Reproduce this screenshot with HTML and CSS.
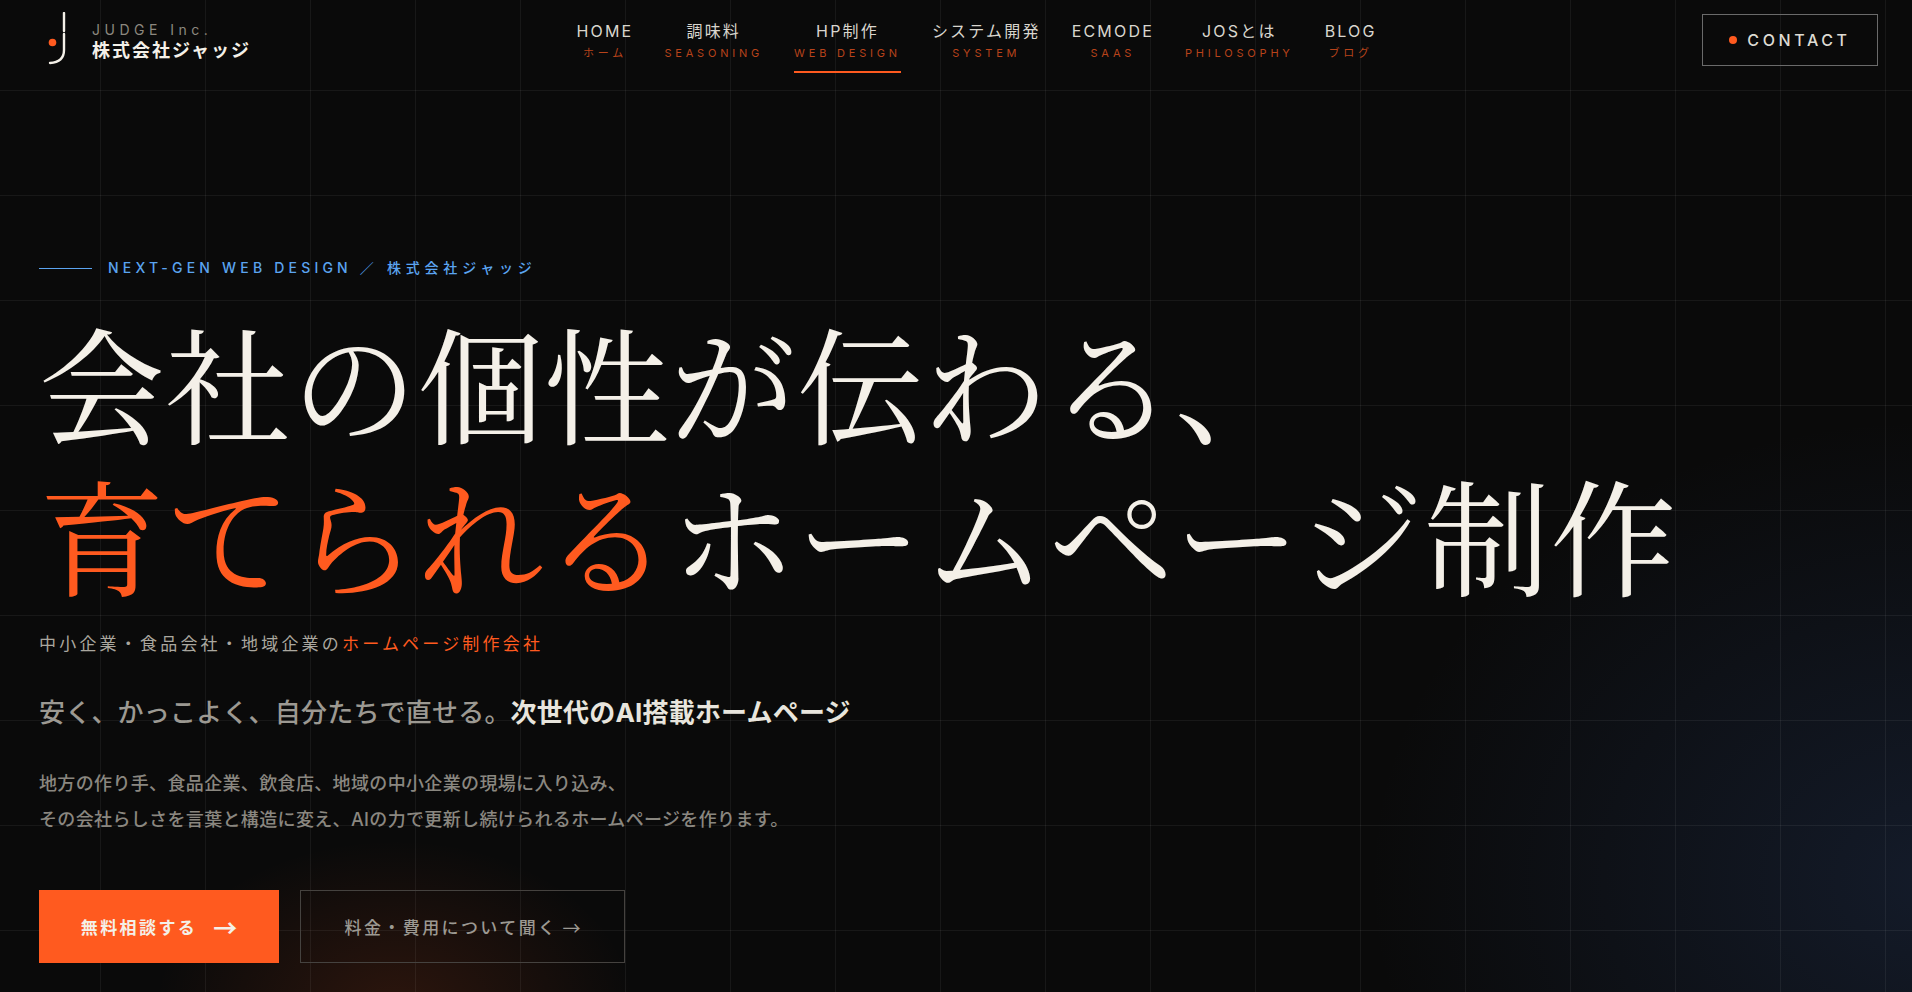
FILE: index.html
```html
<!DOCTYPE html>
<html lang="ja">
<head>
  <meta charset="UTF-8" />
  <meta name="viewport" content="width=device-width, initial-scale=1.0"/>
  <title>株式会社ジャッジ</title>
  <link rel="stylesheet" href="styles.css">
</head>
<body>
  <header class="site-header">
    <a class="logo" href="#">
      <svg class="logo-mark" width="30" height="56" viewBox="0 0 30 56" fill="none">
        <path d="M25 1V19" stroke="#f4f0e8" stroke-width="2.400" stroke-linecap="round"/>
        <path d="M25 22V38C25 46 20 50.500 11 51" stroke="#f4f0e8" stroke-width="2.400" stroke-linecap="round"/>
        <circle cx="13.500" cy="30.500" r="3.800" fill="#ff5a1f"/>
      </svg>
      <span class="logo-text">
        <span class="logo-en">JUDGE Inc.</span>
        <span class="logo-ja">株式会社ジャッジ</span>
      </span>
    </a>

    <nav class="nav">
      <a class="nav-item" href="#"><span class="nav-main">HOME</span><span class="nav-sub">ホーム</span></a>
      <a class="nav-item" href="#"><span class="nav-main">調味料</span><span class="nav-sub">SEASONING</span></a>
      <a class="nav-item active" href="#"><span class="nav-main">HP制作</span><span class="nav-sub">WEB DESIGN</span></a>
      <a class="nav-item" href="#"><span class="nav-main">システム開発</span><span class="nav-sub">SYSTEM</span></a>
      <a class="nav-item" href="#"><span class="nav-main">ECMODE</span><span class="nav-sub">SAAS</span></a>
      <a class="nav-item" href="#"><span class="nav-main">JOSとは</span><span class="nav-sub">PHILOSOPHY</span></a>
      <a class="nav-item" href="#"><span class="nav-main">BLOG</span><span class="nav-sub">ブログ</span></a>
    </nav>

    <a class="contact" href="#"><span class="contact-dot"></span>CONTACT</a>
  </header>

  <main class="hero">
    <p class="eyebrow"><span class="eyebrow-line"></span>NEXT-GEN WEB DESIGN ／ <span class="eyebrow-ja">株式会社ジャッジ</span></p>
    <h1 class="hero-title">会社の個性が伝わる、<br><span class="accent">育てられる</span>ホームページ制作</h1>
    <p class="hero-sub">中小企業・食品会社・地域企業の<span class="accent">ホームページ制作会社</span></p>
    <p class="hero-tag">安く、かっこよく、自分たちで直せる。<strong>次世代のAI搭載ホームページ</strong></p>
    <p class="hero-desc">地方の作り手、食品企業、飲食店、地域の中小企業の現場に入り込み、<br>その会社らしさを言葉と構造に変え、AIの力で更新し続けられるホームページを作ります。</p>
    <div class="hero-actions">
      <a class="btn btn-primary" href="#">無料相談する<span class="btn-arrow">→</span></a>
      <a class="btn btn-ghost" href="#">料金・費用について聞く<span class="btn-arrow-thin">→</span></a>
    </div>
  </main>
</body>
</html>
```

FILE: styles.css
```css
* { box-sizing: border-box; }
html, body { height: 100%; }
body {
  margin: 0;
  overflow: hidden;
  color: #f4f0e8;
  font-family: Inter, "Noto Sans CJK JP", sans-serif;
  background-color: #0a0a0a;
  background-image:
    linear-gradient(rgba(255,255,255,.06) 1px, transparent 1px),
    linear-gradient(90deg, rgba(255,255,255,.06) 1px, transparent 1px),
    radial-gradient(ellipse 240px 170px at 395px 1010px, rgba(255,90,31,.14), transparent 100%),
    radial-gradient(ellipse 560px 460px at 1930px 880px, rgba(50,80,140,.24), transparent 100%);
  background-size: 105px 105px, 105px 105px, auto, auto;
  background-position: 0 90px, 100px 0, 0 0, 0 0;
}
a { color: inherit; text-decoration: none; }
p, h1 { margin: 0; }

.site-header { display: flex; justify-content: space-between; align-items: center; height: 90px; padding: 0 34px 0 39px; }
.logo { display: flex; align-items: center; gap: 12px; }
.logo-mark { margin-top: -10px; }
.logo-text { display: flex; flex-direction: column; margin-top: -7px; margin-left: 11px; }
.logo-en { font-size: 14px; line-height: 19px; letter-spacing: 4.5px; color: #8c887f; }
.logo-ja { font-size: 18px; line-height: 24px; font-weight: 700; letter-spacing: 2px; }

.nav { display: flex; gap: 31px; height: 90px; }
.nav-item { display: flex; flex-direction: column; align-items: center; height: 73px; padding-top: 21px; }
.nav-item.active { border-bottom: 2px solid #ff5a1f; }
.nav-main { font-size: 16px; line-height: 20px; letter-spacing: 2.2px; color: #d9d6ce; white-space: nowrap; }
.nav-sub { margin-top: 4px; font-size: 11px; line-height: 16px; letter-spacing: 3.8px; color: #b8431a; white-space: nowrap; }

.contact { display: flex; align-items: center; justify-content: center; gap: 10px; width: 176px; height: 52px; margin-top: -10px; border: 1px solid #6a6a6a; font-size: 16px; font-weight: 500; letter-spacing: 3.6px; color: #dedbd3; }
.contact-dot { width: 8px; height: 8px; border-radius: 50%; background: #ff5a1f; }

.hero { padding: 168px 39px 0; }
.eyebrow { display: flex; align-items: center; font-size: 14px; font-weight: 500; line-height: 20px; letter-spacing: 4.2px; color: #5ba4f0; white-space: pre; }
.eyebrow-line { width: 53px; height: 1px; margin-right: 16px; background: #5ba4f0; }
.eyebrow-ja { margin-left: 1px; letter-spacing: 4.8px; }
.hero-title { margin-top: 27px; font-family: "Noto Serif CJK JP", "Noto Sans CJK JP", serif; font-size: 126px; line-height: 152px; font-weight: 400; letter-spacing: .15px; color: #f4f0e8; white-space: nowrap; }
.accent { color: #ff5a1f; }
.hero-sub { margin-top: 22px; font-size: 17px; font-weight: 400; line-height: 26px; letter-spacing: 3.2px; color: #aaa79f; }
.hero-tag { margin-top: 36px; font-size: 26px; font-weight: 500; line-height: 40px; letter-spacing: .2px; color: #9c9992; }
.hero-tag strong { color: #e8e5dd; font-weight: 700; }
.hero-desc { margin-top: 33px; font-size: 18px; font-weight: 500; line-height: 36px; letter-spacing: .35px; color: #8a8780; }
.hero-actions { display: flex; gap: 21px; margin-top: 52px; }
.btn { display: flex; align-items: center; justify-content: center; height: 73px; font-size: 17px; letter-spacing: 2.4px; }
.btn-primary { width: 240px; background: #ff5a1f; color: #f4f0e8; font-weight: 700; }
.btn-arrow { margin-left: 16px; font-family: "Noto Sans CJK JP", sans-serif; font-size: 24px; line-height: 24px; letter-spacing: 0; }
.btn-ghost { width: 325px; border: 1px solid #45423f; color: #9c9992; font-weight: 500; }
.btn-arrow-thin { margin-left: 5px; font-weight: 400; font-family: "Noto Sans CJK JP", sans-serif; font-size: 18px; letter-spacing: 0; }
```
